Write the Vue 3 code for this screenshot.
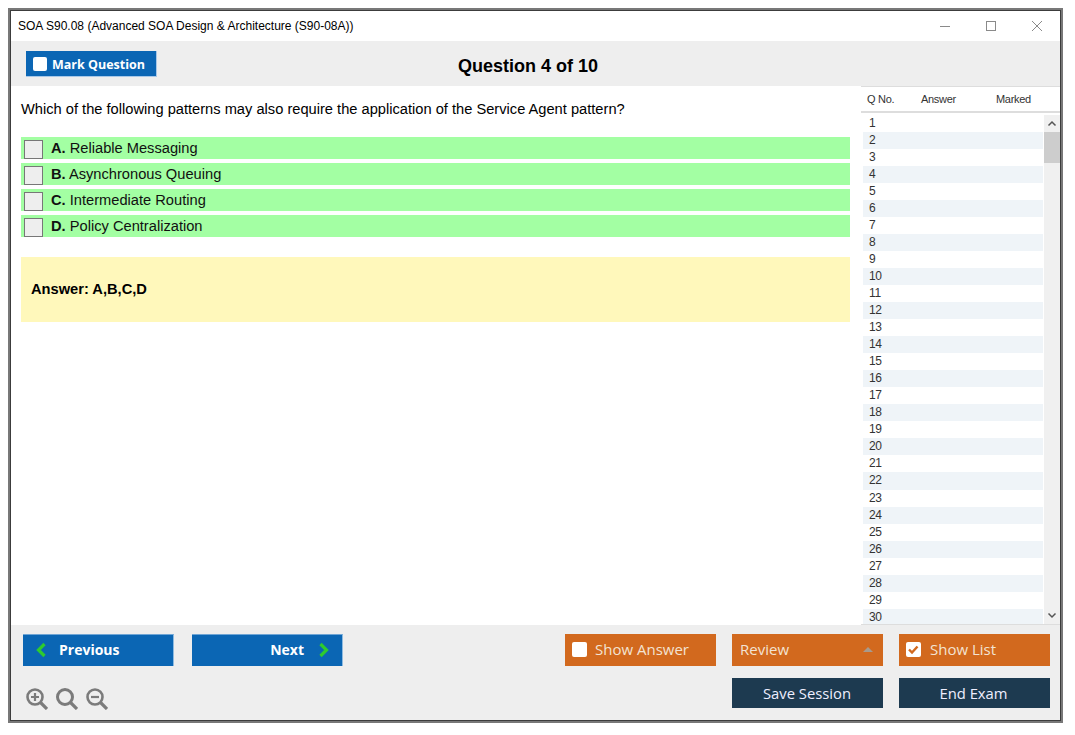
<script setup>
const options = [
  { key: 'A.', text: 'Reliable Messaging' },
  { key: 'B.', text: 'Asynchronous Queuing' },
  { key: 'C.', text: 'Intermediate Routing' },
  { key: 'D.', text: 'Policy Centralization' },
]
const rows = Array.from({ length: 30 }, (_, i) => i + 1)
</script>

<template>
  <div class="page">
    <div class="window">
      <header class="titlebar">
        <span class="title">SOA S90.08 (Advanced SOA Design &amp; Architecture (S90-08A))</span>
        <div class="controls">
          <svg width="12" height="12" viewBox="0 0 12 12"><path d="M1 6.5h10" stroke="#8a8a8a" fill="none" /></svg>
          <svg width="12" height="12" viewBox="0 0 12 12"><rect x="1.5" y="1.5" width="9" height="9" stroke="#8a8a8a" fill="none" /></svg>
          <svg width="12" height="12" viewBox="0 0 12 12"><path d="M1 1l10 10M11 1L1 11" stroke="#8a8a8a" fill="none" /></svg>
        </div>
      </header>

      <div class="toolbar">
        <button class="mark">
          <span class="box small"></span>
          <span>Mark Question</span>
        </button>
        <h1 class="counter">Question 4 of 10</h1>
      </div>

      <div class="content">
        <main class="question">
          <p class="prompt">Which of the following patterns may also require the application of the Service Agent pattern?</p>
          <ul class="options">
            <li v-for="o in options" :key="o.key" class="option">
              <span class="tick"></span>
              <span class="option-text"><b>{{ o.key }}</b> {{ o.text }}</span>
            </li>
          </ul>
          <div class="answer">Answer: A,B,C,D</div>
        </main>

        <aside class="list">
          <div class="list-head">
            <span class="c1">Q No.</span>
            <span class="c2">Answer</span>
            <span class="c3">Marked</span>
          </div>
          <div class="list-body">
            <div class="rows">
              <div v-for="r in rows" :key="r" class="row">{{ r }}</div>
            </div>
            <div class="scrollbar">
              <svg class="arrow" width="16" height="17" viewBox="0 0 16 17"><path d="M4.5 10.5L8 7l3.5 3.5" stroke="#555" stroke-width="1.5" fill="none" /></svg>
              <div class="thumb"></div>
              <svg class="arrow bottom" width="16" height="17" viewBox="0 0 16 17"><path d="M4.5 6.5L8 10 11.5 6.5" stroke="#555" stroke-width="1.5" fill="none" /></svg>
            </div>
          </div>
        </aside>
      </div>

      <footer class="footer">
        <div class="foot-row first">
          <button class="btn blue prev">
            <svg width="12" height="16" viewBox="0 0 12 16"><path d="M9.5 2L3.5 8l6 6" stroke="#2ecb2e" stroke-width="3.2" fill="none" /></svg>
            <span>Previous</span>
          </button>
          <button class="btn blue next">
            <span>Next</span>
            <svg width="12" height="16" viewBox="0 0 12 16"><path d="M2.5 2l6 6-6 6" stroke="#2ecb2e" stroke-width="3.2" fill="none" /></svg>
          </button>
          <button class="btn orange show-answer">
            <span class="box"></span>
            <span>Show Answer</span>
          </button>
          <button class="btn orange review">
            <span>Review</span>
            <span class="caret"></span>
          </button>
          <button class="btn orange show-list">
            <span class="box">
              <svg width="15" height="15" viewBox="0 0 15 15"><path d="M3 7.5l3 3 5.5-6" stroke="#d2691e" stroke-width="2.4" fill="none" /></svg>
            </span>
            <span>Show List</span>
          </button>
        </div>
        <div class="foot-row second">
          <div class="zooms">
            <svg width="22" height="22" viewBox="0 0 22 22"><circle cx="9" cy="9" r="7.5" stroke="#7b7b7b" stroke-width="2.6" fill="none" /><path d="M14.5 14.5L21 21" stroke="#7b7b7b" stroke-width="3.2" /><path d="M9 5v8M5 9h8" stroke="#7b7b7b" stroke-width="2.2" /></svg>
            <svg width="22" height="22" viewBox="0 0 22 22"><circle cx="9" cy="9" r="7.5" stroke="#7b7b7b" stroke-width="3" fill="none" /><path d="M14.5 14.5L21 21" stroke="#7b7b7b" stroke-width="3.2" /></svg>
            <svg width="22" height="22" viewBox="0 0 22 22"><circle cx="9" cy="9" r="7.5" stroke="#7b7b7b" stroke-width="2.6" fill="none" /><path d="M14.5 14.5L21 21" stroke="#7b7b7b" stroke-width="3.2" /><path d="M5 9h8" stroke="#7b7b7b" stroke-width="2.2" /></svg>
          </div>
          <button class="btn navy save">Save Session</button>
          <button class="btn navy end">End Exam</button>
        </div>
      </footer>
    </div>
  </div>
</template>

<style>
html, body { margin: 0; background: #fff; }
</style>

<style scoped>
.page {
  width: 1075px;
  height: 735px;
  padding: 8px 0 0 8px;
  box-sizing: border-box;
  background: #fff;
}
.window {
  width: 1055px;
  height: 715px;
  box-sizing: border-box;
  border: 2px solid #787878;
  outline: 1px solid #3c3c3c;
  outline-offset: -3px;
  padding: 1px;
  display: flex;
  flex-direction: column;
  background: #fff;
  font-family: "Liberation Sans", Arial, sans-serif;
  color: #000;
}
.titlebar {
  height: 30px;
  flex: none;
  display: flex;
  align-items: center;
  padding-left: 7px;
  background: #fff;
}
.title { font-size: 12px; }
.controls {
  margin-left: auto;
  display: flex;
  gap: 34px;
  padding-right: 17px;
  align-items: center;
}
.controls svg { display: block; }
.toolbar {
  height: 45px;
  flex: none;
  background: #eee;
  position: relative;
  display: flex;
  align-items: center;
  padding-left: 15px;
  box-sizing: border-box;
}
.mark {
  width: 131px;
  height: 26px;
  margin-top: 1px;
  border: 1px solid #a8c8e8;
  border-width: 0 1px 1px 0;
  background: #0b66b4;
  color: #fff;
  display: flex;
  align-items: center;
  gap: 5px;
  padding: 1px 0 0 7px;
  font: 700 12.5px "Open Sans", sans-serif;
  box-sizing: border-box;
}
.box {
  width: 15px;
  height: 15px;
  background: #fff;
  border-radius: 2px;
  display: block;
  flex: none;
}
.box.small { width: 14px; height: 14px; }
.box svg { display: block; }
.counter {
  margin: 0;
  font-size: 18px;
  font-weight: 700;
  position: absolute;
  left: 447px;
  top: 15px;
  line-height: 21px;
}
.content {
  flex: 1;
  min-height: 0;
  display: flex;
  background: #fff;
}
.question {
  width: 850px;
  flex: none;
  padding: 0 0 0 10px;
  box-sizing: border-box;
}
.prompt {
  margin: 0;
  padding-top: 15px;
  font-size: 14.67px;
  line-height: 17px;
}
.options {
  list-style: none;
  margin: 19px 0 0;
  padding: 0;
  display: flex;
  flex-direction: column;
  gap: 4px;
  width: 829px;
}
.option {
  height: 22px;
  background: #a3ffa3;
  display: flex;
  align-items: center;
  padding-left: 3px;
}
.tick {
  width: 19px;
  height: 19px;
  box-sizing: border-box;
  border: 1px solid #777;
  background: #eee;
  flex: none;
  margin-top: 2px;
}
.option-text {
  margin-left: 8px;
  font-size: 14.67px;
  color: #111;
}
.answer {
  width: 829px;
  height: 65px;
  margin-top: 20px;
  background: #fff8bb;
  font-size: 14.67px;
  font-weight: 700;
  display: flex;
  align-items: center;
  padding: 0 0 2px 10px;
  box-sizing: border-box;
}
.list {
  width: 199px;
  flex: none;
  display: flex;
  flex-direction: column;
  font-family: "Liberation Sans", Arial, sans-serif;
  border-top: 1px solid #ddd;
}
.list-head {
  height: 24px;
  flex: none;
  display: flex;
  align-items: center;
  font-size: 11px;
  color: #333;
  border-bottom: 2px solid #ddd;
  background: #fff;
  letter-spacing: -0.3px;
}
.c1 { margin-left: 6px; width: 54px; }
.c2 { width: 75px; }
.list-body {
  flex: 1;
  min-height: 0;
  display: flex;
  overflow: hidden;
  border-bottom: 1px solid #ddd;
  padding-top: 2px;
}
.rows {
  width: 180px;
  flex: none;
  overflow: hidden;
  margin-left: 2px;
  margin-top: -0.5px;
}
.row {
  height: 17.05px;
  line-height: 17px;
  font-size: 12px;
  padding-left: 6px;
  color: #333;
  letter-spacing: -0.3px;
}
.row:nth-child(even) { background: #eff4f8; }
.scrollbar {
  width: 16px;
  flex: none;
  margin-left: 1px;
  background: #f0f0f0;
  display: flex;
  flex-direction: column;
}
.arrow { display: block; flex: none; }
.arrow.bottom { margin-top: auto; }
.thumb {
  height: 31px;
  background: #cdcdcd;
}
.footer {
  height: 95px;
  flex: none;
  background: #eee;
  padding: 9px 0 0 12px;
  box-sizing: border-box;
}
.foot-row { display: flex; }
.second { margin-top: 12px; align-items: flex-start; }
.btn {
  box-sizing: border-box;
  width: 151px;
  height: 32px;
  border: 0;
  display: flex;
  align-items: center;
  padding: 0;
  color: #fff;
  font: 14.5px "Open Sans", sans-serif;
}
.blue {
  background: #0b66b4;
  font-size: 14px;
  font-weight: 700;
  border-right: 1px solid #8fbbe0;
  border-top: 1px solid #6fa5d5;
  padding-bottom: 2px;
}
.prev { padding-left: 12px; gap: 12px; }
.next { margin-left: 18px; justify-content: flex-end; padding-right: 12px; gap: 14px; }
.orange {
  background: #d2691e;
  color: #f3e3d3;
  font-size: 15px;
  padding-left: 7px;
  padding-bottom: 2px;
  gap: 8px;
}
.show-answer { margin-left: 222px; }
.review { margin-left: 16px; padding-left: 8px; padding-right: 10px; justify-content: space-between; }
.show-list { margin-left: 16px; gap: 9px; }
.show-answer .box, .show-list .box { margin-top: 1px; }
.caret {
  width: 0;
  height: 0;
  border: 5px solid transparent;
  border-top: 0;
  border-bottom: 5px solid #a89a8c;
}
.zooms {
  width: 709px;
  flex: none;
  display: flex;
  gap: 8px;
  padding: 10px 0 0 3px;
  box-sizing: border-box;
}
.zooms svg { display: block; }
.navy {
  background: #1d3a50;
  height: 30px;
  justify-content: center;
  color: #eef;
  font-size: 14.8px;
}
.save { padding-right: 1px; }
.end { margin-left: 16px; padding-right: 2px; }
</style>
